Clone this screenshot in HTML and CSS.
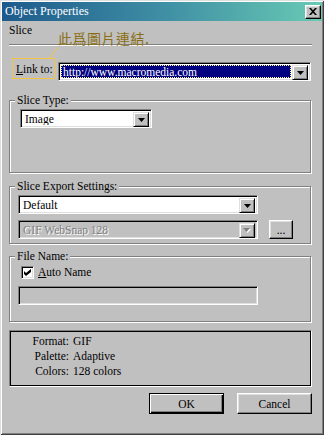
FILE: index.html
```html
<!doctype html>
<html lang="zh-Hant">
  <head>
    <meta charset="UTF-8" />
    <meta name="viewport" content="width=device-width, initial-scale=1.0" />
    <title>Object Properties</title>
    <link rel="stylesheet" href="styles.css">
  </head>
  <body>
    <div class="window">
      <div class="titlebar">
        <span class="title">Object Properties</span>
        <button class="close-btn" title="Close">
          <svg width="8" height="7" viewBox="0 0 8 7">
            <path d="M0 0h2l2 2.3L6 0h2L5 3.5 8 7H6L4 4.7 2 7H0l3-3.5z" fill="#000" />
          </svg>
        </button>
      </div>

      <div class="content">
        <div class="tab-name">Slice</div>
        <div class="separator"></div>

        <div class="link-row">
          <label class="link-label"><u>L</u>ink to:</label>
          <div class="combo combo-link">
            <span class="combo-value selected">http://www.macromedia.com</span>
            <span class="combo-btn">
              <svg width="7" height="4" viewBox="0 0 7 4"><path d="M0 0h7L3.5 4z" /></svg>
            </span>
          </div>
        </div>

        <fieldset class="group group-type">
          <legend>Slice Type:</legend>
          <div class="combo combo-type">
            <span class="combo-value">Image</span>
            <span class="combo-btn">
              <svg width="7" height="4" viewBox="0 0 7 4"><path d="M0 0h7L3.5 4z" /></svg>
            </span>
          </div>
        </fieldset>

        <fieldset class="group group-export">
          <legend>Slice Export Settings:</legend>
          <div class="combo combo-wide">
            <span class="combo-value">Default</span>
            <span class="combo-btn">
              <svg width="7" height="4" viewBox="0 0 7 4"><path d="M0 0h7L3.5 4z" /></svg>
            </span>
          </div>
          <div class="export-row">
            <div class="combo combo-wide disabled">
              <span class="combo-value">GIF WebSnap 128</span>
              <span class="combo-btn">
                <svg width="8" height="5" viewBox="0 0 8 5">
                  <path d="M1 1h7L4.5 5z" fill="#fff" />
                  <path d="M0 0h7L3.5 4z" fill="#808080" />
                </svg>
              </span>
            </div>
            <button class="btn btn-small">...</button>
          </div>
        </fieldset>

        <fieldset class="group group-file">
          <legend>File Name:</legend>
          <div class="check-row">
            <span class="checkbox">
              <svg width="7" height="7" viewBox="0 0 7 7">
                <path d="M0 2l2 2 5-4v3L2 7 0 5z" fill="#000" />
              </svg>
            </span>
            <span class="check-label"><u>A</u>uto Name</span>
          </div>
          <div class="textfield"></div>
        </fieldset>

        <div class="info">
          <span class="info-key">Format:</span><span>GIF</span>
          <span class="info-key">Palette:</span><span>Adaptive</span>
          <span class="info-key">Colors:</span><span>128 colors</span>
        </div>

        <div class="buttons">
          <button class="btn btn-default">OK</button>
          <button class="btn">Cancel</button>
        </div>
      </div>

      <!-- annotation drawn over the dialog -->
      <div class="note">此爲圖片連結.</div>
      <svg class="note-line" width="12" height="12" viewBox="0 0 12 12">
        <line x1="10" y1="0.5" x2="1" y2="11.5" stroke="#f5c542" stroke-width="1" />
      </svg>
    </div>
  </body>
</html>
```

FILE: styles.css
```css
* {
  margin: 0;
  padding: 0;
  box-sizing: border-box;
}

body {
  width: 324px;
  height: 435px;
  overflow: hidden;
  background: #c0c0c0;
  font-family: "Liberation Serif", "Noto Sans CJK TC", serif;
  font-size: 11.5px;
  color: #000;
}

.window {
  position: relative;
  width: 324px;
  height: 435px;
  padding: 2px;
  background: #c0c0c0;
  box-shadow:
    inset 1px 1px #dfdfdf,
    inset -1px -1px #404040,
    inset 2px 2px #fff,
    inset -2px -2px #808080;
}

/* title bar */

.titlebar {
  display: flex;
  align-items: center;
  justify-content: space-between;
  height: 19px;
  padding: 0 1px 0 3px;
  background: linear-gradient(to right, #1d5a8c, #3f8ea4 50%, #68cab4);
  color: #fff;
}

.title {
  font-size: 12px;
  line-height: 19px;
}

.close-btn {
  display: flex;
  align-items: center;
  justify-content: center;
  width: 16px;
  height: 14px;
  background: #c0c0c0;
  border: 1px solid;
  border-color: #fff #000 #000 #fff;
  box-shadow: inset -1px -1px #808080, inset 1px 1px #dfdfdf;
}

/* body */

.content {
  padding: 2px 10px 0 7px;
}

.tab-name {
  line-height: 14px;
}

.separator {
  margin-top: 7px;
  height: 2px;
  border-top: 1px solid #808080;
  border-bottom: 1px solid #fff;
}

.link-row {
  display: flex;
  align-items: flex-start;
  margin-top: 12px;
}

.link-label {
  display: flex;
  align-items: center;
  height: 21px;
  width: 43px;
  margin-left: 3px;
  padding-left: 3px;
  border: 1px solid #f5c542;
}

.combo {
  display: flex;
  height: 19px;
  padding: 2px;
  background: #fff;
  border: 1px solid;
  border-color: #808080 #fff #fff #808080;
  box-shadow: inset 1px 1px #000, inset -1px -1px #dfdfdf;
}

.combo-link {
  width: 253px;
  margin: 4px 0 0 3px;
}

.combo-value {
  flex: 1;
  line-height: 15px;
  padding-left: 2px;
  white-space: nowrap;
  overflow: hidden;
}

.combo-value.selected {
  margin-right: 1px;
  background: #000080;
  color: #fff;
  outline: 1px dotted #fff68a;
  outline-offset: -1px;
}

.combo-btn {
  display: flex;
  align-items: center;
  justify-content: center;
  width: 16px;
  height: 15px;
  background: #c0c0c0;
  border: 1px solid;
  border-color: #dfdfdf #000 #000 #dfdfdf;
  box-shadow: inset 1px 1px #fff, inset -1px -1px #808080;
}

.combo.disabled {
  background: #c0c0c0;
}

.combo.disabled .combo-value {
  color: #808080;
  text-shadow: 1px 1px #fff;
}

/* group boxes */

.group {
  margin-right: 1px;
  padding: 0 10px 0 8px;
  border: 1px solid #808080;
  box-shadow: inset 1px 1px #fff, 1px 1px #fff;
}

.group legend {
  margin-left: -3px;
  padding: 0 2px;
  line-height: 14px;
  background: #c0c0c0;
}

.group-type {
  margin-top: 12px;
  padding-top: 2px;
  padding-bottom: 44px;
}

.combo-type {
  width: 132px;
  margin-left: 2px;
}

.group-export {
  margin-top: 6px;
  padding-top: 2px;
  padding-bottom: 4px;
}

.combo-wide {
  width: 240px;
}

.export-row {
  display: flex;
  align-items: flex-start;
  gap: 11px;
  margin-top: 6px;
}

.group-file {
  margin-top: 5px;
  padding-top: 3px;
  padding-bottom: 16px;
}

.check-row {
  display: flex;
  align-items: center;
  height: 13px;
  margin-left: 3px;
}

.checkbox {
  display: flex;
  align-items: center;
  justify-content: center;
  width: 13px;
  height: 13px;
  background: #fff;
  border: 1px solid;
  border-color: #808080 #fff #fff #808080;
  box-shadow: inset 1px 1px #000, inset -1px -1px #dfdfdf;
}

.check-label {
  margin-left: 4px;
  line-height: 13px;
}

.textfield {
  width: 240px;
  height: 19px;
  margin-top: 7px;
  background: #c0c0c0;
  border: 1px solid;
  border-color: #808080 #fff #fff #808080;
  box-shadow: inset 1px 1px #000, inset -1px -1px #dfdfdf;
}

/* info panel */

.info {
  display: grid;
  grid-template-columns: 50px auto;
  grid-auto-rows: 15px;
  column-gap: 4px;
  height: 57px;
  margin-top: 8px;
  padding: 3px 0 0 9px;
  line-height: 15px;
  border: 1px solid;
  border-color: #808080 #fff #fff #808080;
  box-shadow: inset 0 0 0 1px #000;
}

.info-key {
  text-align: right;
}

/* buttons */

.buttons {
  display: flex;
  justify-content: flex-end;
  gap: 13px;
  margin-top: 6px;
}

.btn {
  width: 75px;
  height: 21px;
  font-family: inherit;
  font-size: 11.5px;
  color: #000;
  background: #c0c0c0;
  border: 1px solid;
  border-color: #fff #000 #000 #fff;
  box-shadow: inset -1px -1px #808080, inset 1px 1px #dfdfdf;
}

.btn-default {
  border: 1px solid #000;
  box-shadow: inset 1px 1px #fff, inset -1px -1px #000, inset -2px -2px #808080;
}

.btn-small {
  width: 24px;
  height: 19px;
  line-height: 12px;
}

/* annotation */

.note {
  position: absolute;
  left: 58px;
  top: 30px;
  font-family: "Noto Sans CJK TC", sans-serif;
  font-size: 14px;
  line-height: 17px;
  letter-spacing: 0.5px;
  color: #8a6e16;
}

.note-line {
  position: absolute;
  left: 48px;
  top: 47px;
}
```
